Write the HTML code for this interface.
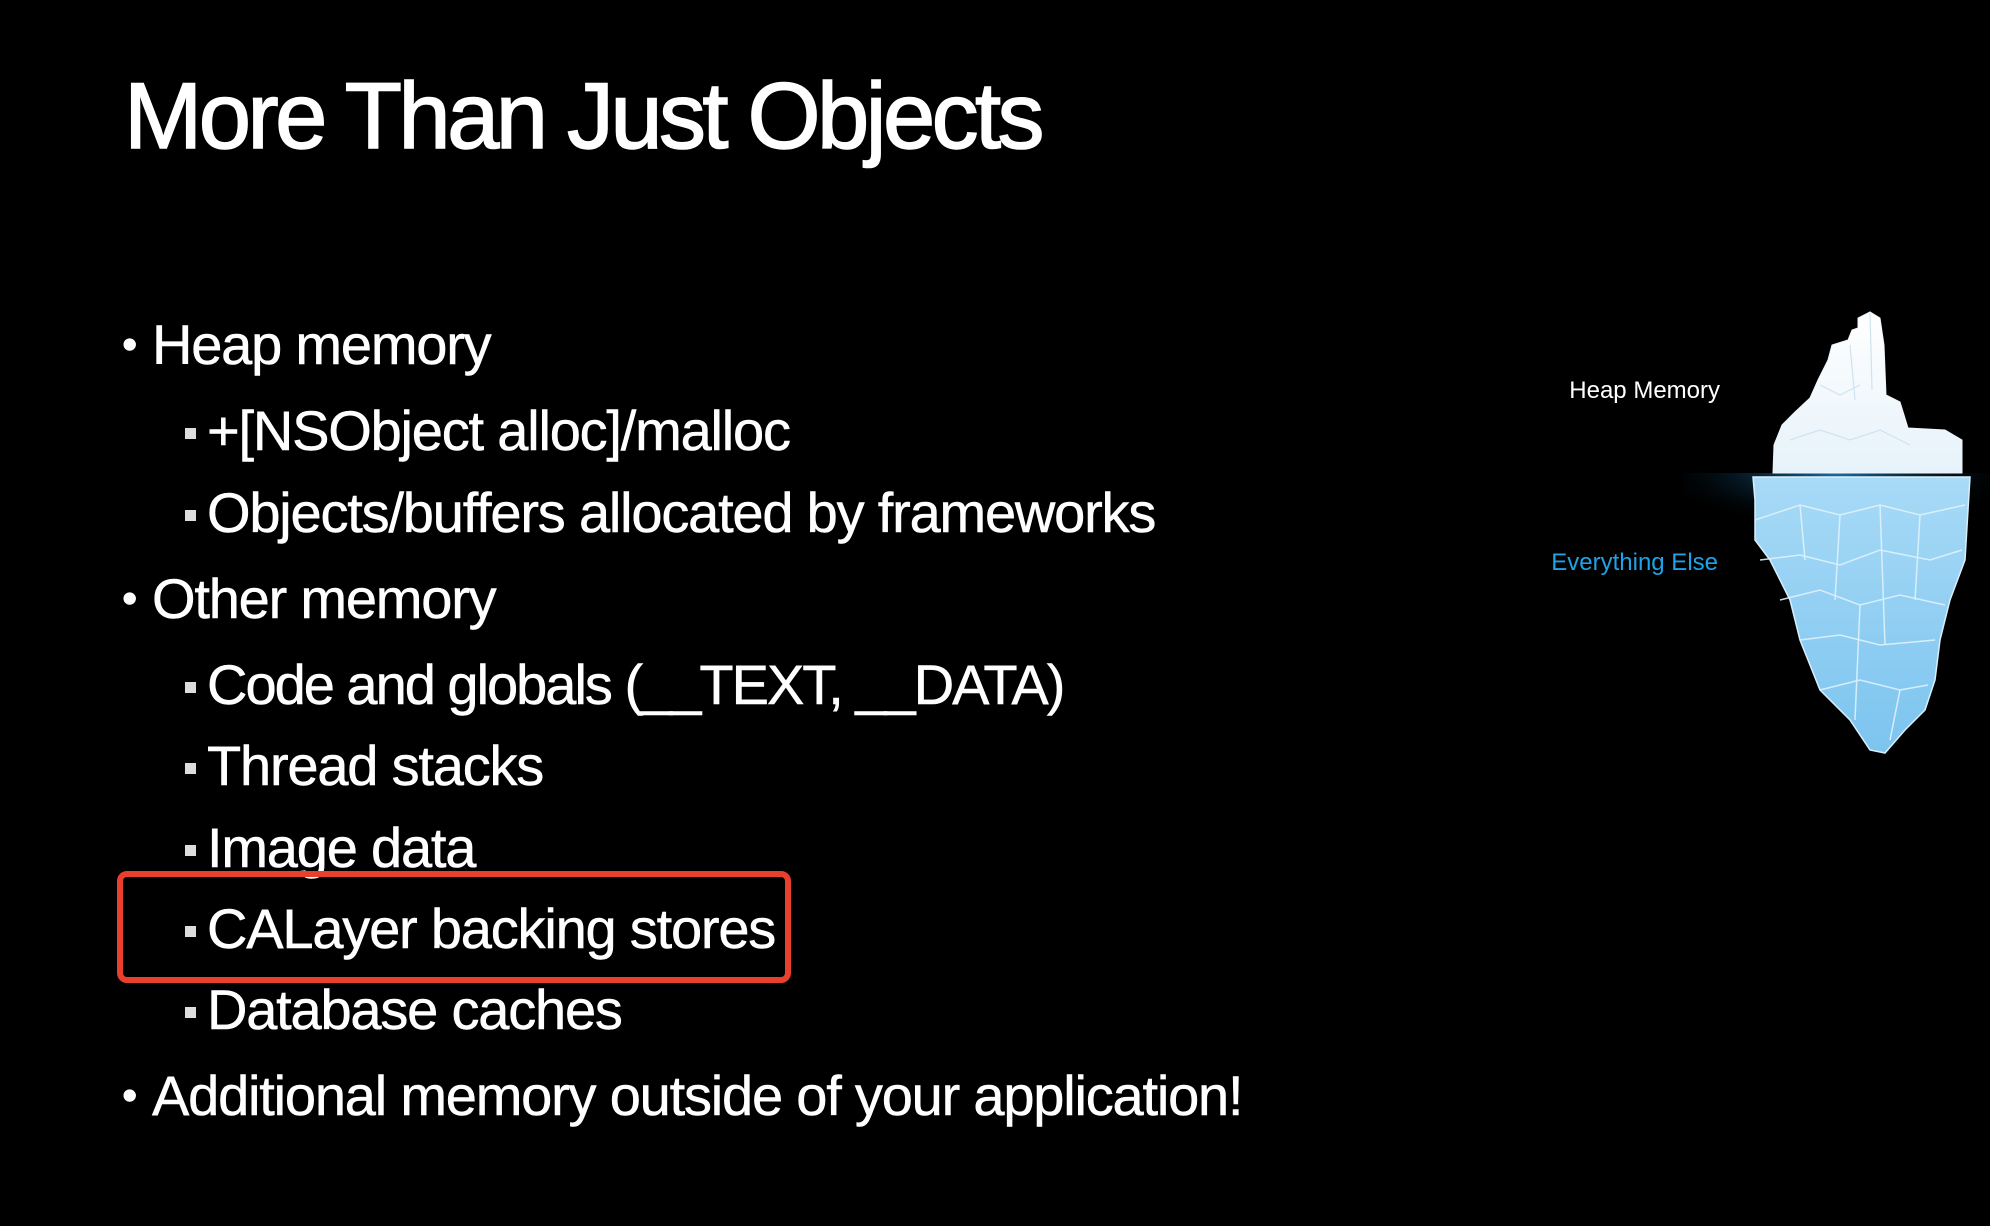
<!DOCTYPE html>
<html><head><style>
html,body{margin:0;padding:0;background:#000;width:1990px;height:1226px;overflow:hidden;font-family:"Liberation Sans",sans-serif;color:#fff}
.t{position:absolute;left:124px;top:62px;font-size:94px;letter-spacing:-3.6px;white-space:nowrap;-webkit-text-stroke:1.5px #fff}
.l{position:absolute;font-size:56px;letter-spacing:-1.2px;white-space:nowrap;line-height:70px;height:70px;-webkit-text-stroke:0.5px #fff}
.b1{left:122px}
.b1:before{content:"•";position:absolute;left:0;font-size:44px}
.b1 span{margin-left:30px}
.b2{left:183px}
.b2:before{content:"";position:absolute;left:2px;top:32px;width:11px;height:11px;background:#ddd}
.b2 span{margin-left:24px}
.box{position:absolute;left:117px;top:871px;width:662px;height:100px;border:6px solid #e8402c;border-radius:10px}
.lab{position:absolute;font-size:24px;white-space:nowrap}
</style></head><body>
<div class="t">More Than Just Objects</div>
<div class="l b1" style="top:310px"><span>Heap memory</span></div>
<div class="l b2" style="top:396px"><span>+[NSObject alloc]/malloc</span></div>
<div class="l b2" style="top:478px"><span>Objects/buffers allocated by frameworks</span></div>
<div class="l b1" style="top:564px"><span>Other memory</span></div>
<div class="l b2" style="top:650px"><span style="letter-spacing:-2px">Code and globals (__TEXT, __DATA)</span></div>
<div class="l b2" style="top:731px"><span>Thread stacks</span></div>
<div class="l b2" style="top:813px"><span>Image data</span></div>
<div class="box"></div>
<div class="l b2" style="top:894px"><span>CALayer backing stores</span></div>
<div class="l b2" style="top:975px"><span>Database caches</span></div>
<div class="l b1" style="top:1061px"><span>Additional memory outside of your application!</span></div>
<div class="lab" style="right:270px;top:377px">Heap Memory</div>
<div class="lab" style="right:272px;top:549px;color:#1fa2e6">Everything Else</div>
<svg style="position:absolute;left:0;top:0" width="1990" height="1226">
<defs>
<radialGradient id="g" cx="0.5" cy="0" r="0.6">
<stop offset="0" stop-color="#1a7ab8" stop-opacity="0.9"/>
<stop offset="1" stop-color="#000" stop-opacity="0"/>
</radialGradient>
<linearGradient id="w" x1="0" y1="0" x2="0" y2="1"><stop offset="0" stop-color="#ffffff"/><stop offset="1" stop-color="#e6f2fa"/></linearGradient>
<linearGradient id="u" x1="0" y1="0" x2="0" y2="1"><stop offset="0" stop-color="#a8daf6"/><stop offset="1" stop-color="#7cc4ef"/></linearGradient>
</defs>
<rect x="1683" y="473" width="307" height="90" fill="url(#g)"/>
<polygon fill="url(#u)" stroke="#d8effc" stroke-width="1.5" points="1753,477 1970,477 1968,510 1965,560 1950,600 1940,640 1935,680 1925,710 1905,730 1885,753 1870,750 1850,720 1820,690 1800,640 1790,600 1770,560 1755,540 1755,500"/>
<g stroke="#dff2fd" stroke-width="1.5" fill="none" opacity="0.9">
<path d="M1755,520 L1800,505 L1840,515 L1880,505 L1920,515 L1965,505"/>
<path d="M1760,560 L1800,555 L1840,565 L1880,550 L1930,560 L1962,550"/>
<path d="M1780,600 L1820,590 L1860,605 L1900,595 L1945,605"/>
<path d="M1800,640 L1840,635 L1880,645 L1935,640"/>
<path d="M1820,690 L1860,680 L1900,690 L1928,685"/>
<path d="M1800,505 L1805,560 M1840,515 L1835,600 M1880,505 L1885,645 M1920,515 L1915,600 M1860,605 L1855,720 M1900,690 L1890,740"/>
</g>
<polygon fill="url(#w)" stroke="#eef6fb" stroke-width="1" points="1773,473 1774,445 1782,425 1795,412 1810,398 1818,380 1828,360 1832,345 1848,340 1852,330 1858,328 1858,318 1870,312 1880,318 1884,345 1886,395 1900,402 1908,428 1945,430 1962,440 1962,473"/>
<g stroke="#cfe3ef" stroke-width="1.2" fill="none">
<path d="M1790,440 L1820,430 L1850,440 L1880,430 L1910,445 M1820,385 L1840,395 L1860,385 M1850,345 L1855,400 M1870,313 L1872,390"/>
</g>
</svg>
</body></html>
